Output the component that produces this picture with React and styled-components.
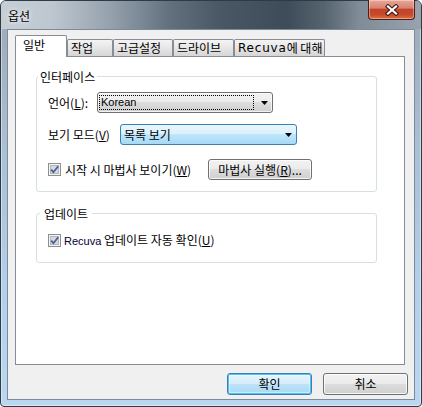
import React from "react";
import styled, { createGlobalStyle, css } from "styled-components";

const kr = `"Noto Sans CJK KR", "Noto Sans", sans-serif`;
const latin = `"Liberation Sans", "Noto Sans CJK KR", sans-serif`;

const GlobalStyle = createGlobalStyle`
  html, body { margin: 0; padding: 0; background: #ffffff; }
  body { font-family: ${kr}; font-size: 12px; color: #000; }
  * { box-sizing: border-box; }
`;

const Window = styled.div`
  width: 422px;
  height: 407px;
  border: 1px solid #2f3a45;
  border-radius: 6px 6px 4px 4px;
  background: linear-gradient(180deg, #9ca9b6 0%, #a9bfd4 35%, #b3cfea 70%, #bad6f1 100%);
  box-shadow: inset 0 0 0 1px rgba(255, 255, 255, 0.45);
  display: flex;
  flex-direction: column;
`;

const TitleBar = styled.div`
  height: 28px;
  flex: none;
  display: flex;
  align-items: flex-start;
  padding-left: 7px;
  border-radius: 5px 5px 0 0;
  background: linear-gradient(
    90deg,
    #c6ced6 0%,
    #bec7d0 12%,
    #95a1ad 26%,
    #63717f 40%,
    #4a5866 52%,
    #3e4c5a 68%,
    #56646f 77%,
    #7f8b97 85%,
    #98a3ae 100%
  );
`;

const Title = styled.div`
  font: 12px/14px ${kr};
  color: #000;
  margin-top: 8px;
  text-shadow: 0 0 4px rgba(255, 255, 255, 0.9), 0 0 8px rgba(255, 255, 255, 0.6);
`;

const CloseButton = styled.div`
  width: 47px;
  height: 20px;
  margin: -1px 6px 0 auto;
  flex: none;
  display: flex;
  align-items: center;
  justify-content: center;
  border: 1px solid #4e1f17;
  border-top: none;
  border-radius: 0 0 4px 4px;
  background: linear-gradient(
    180deg,
    #e6a89a 0%,
    #d9826f 42%,
    #c3432a 50%,
    #c54a2b 78%,
    #df7444 100%
  );
  box-shadow: inset 0 0 0 1px rgba(255, 255, 255, 0.35);
`;

const Client = styled.div`
  flex: 1;
  margin: 0 6px 6px;
  border: 1px solid #7d8a98;
  background: #f0f0f0;
  display: flex;
  flex-direction: column;
  padding: 5px 6px 4px 7px;
`;

const TabStrip = styled.div`
  height: 21px;
  flex: none;
  display: flex;
  align-items: flex-end;
`;

const Tab = styled.div`
  width: ${(p) => p.$w}px;
  flex: none;
  display: flex;
  align-items: center;
  border: 1px solid #898c95;
  border-bottom: none;
  border-radius: 2px 2px 0 0;
  font: 12px/14px ${kr};
  white-space: nowrap;
  ${(p) =>
    p.$active
      ? css`
          height: 22px;
          margin-bottom: -1px;
          background: #ffffff;
          padding: 0 0 3px 7px;
          position: relative;
          z-index: 1;
        `
      : css`
          height: 17px;
          padding: 0 0 0 3px;
          background: linear-gradient(180deg, #f4f4f4 0%, #e6e6e6 50%, #d6d6d6 100%);
        `}
`;

const TabLatin = styled.span`
  font-family: "DejaVu Sans", sans-serif;
  letter-spacing: 0.8px;
`;

const Pane = styled.div`
  flex: 1;
  margin-right: 3px;
  background: #ffffff;
  border: 1px solid #898c95;
  padding: 12px 27px 0 20px;
`;

const Group = styled.fieldset`
  margin: 0;
  min-width: 0;
  padding: ${(p) => p.$pad};
  border: 1px solid #d5dfe5;
  border-radius: 3px;
  & + & {
    margin-top: 14px;
  }
`;

const Legend = styled.legend`
  margin-left: ${(p) => p.$inset}px;
  padding: 0 ${(p) => p.$space}px;
  font: 12px/15px ${kr};
  color: #000;
`;

const Row = styled.div`
  display: flex;
  align-items: center;
  height: ${(p) => p.$h}px;
  margin-top: ${(p) => p.$mt || 0}px;
`;

const FieldLabel = styled.div`
  width: ${(p) => p.$w}px;
  flex: none;
  font: 12px/14px ${kr};
  white-space: nowrap;
`;

const Key = styled.span`
  text-decoration: underline;
  text-underline-offset: 1px;
`;

const Combo = styled.div`
  width: ${(p) => p.$w}px;
  height: 21px;
  flex: none;
  display: flex;
  align-items: center;
  justify-content: space-between;
  border-radius: 3px;
  padding: 0 4px 0 ${(p) => p.$padLeft}px;
  ${(p) =>
    p.$hover
      ? css`
          border: 1px solid #3c7fb1;
          background: linear-gradient(180deg, #eaf6fd 0%, #d9f0fc 49%, #bee6fd 50%, #a7d9f5 100%);
        `
      : css`
          border: 1px solid #707070;
          background: linear-gradient(180deg, #f2f2f2 0%, #ebebeb 49%, #dddddd 50%, #cfcfcf 100%);
          box-shadow: inset 0 0 0 1px rgba(255, 255, 255, 0.7);
        `}
`;

const FocusBox = styled.div`
  width: 155px;
  height: 15px;
  border: 1px dotted #000;
  display: flex;
  align-items: center;
  padding-left: 1px;
  font: 11px/13px ${latin};
`;

const ComboText = styled.div`
  font: 12px/14px ${kr};
  white-space: nowrap;
`;

const CheckLabel = styled.label`
  width: ${(p) => (p.$w ? `${p.$w}px` : "auto")};
  flex: none;
  display: flex;
  align-items: center;
  gap: ${(p) => p.$gap}px;
  font: 12px/14px ${kr};
  white-space: nowrap;
`;

const LatinText = styled.span`
  font: 11px/14px ${latin};
  color: #000033;
`;

const PushButton = styled.div`
  width: ${(p) => p.$w}px;
  height: ${(p) => p.$h}px;
  flex: none;
  display: flex;
  align-items: center;
  justify-content: center;
  border-radius: 3px;
  font: 12px/14px ${kr};
  white-space: nowrap;
  ${(p) =>
    p.$primary
      ? css`
          border: 1px solid #3c7fb1;
          background: linear-gradient(180deg, #e6f4fc 0%, #d4edfb 49%, #bde3f8 50%, #aad8f3 100%);
          box-shadow: inset 0 0 0 1px #4cc2f5, inset 0 0 0 2px rgba(255, 255, 255, 0.4);
        `
      : css`
          border: 1px solid #707070;
          background: linear-gradient(180deg, #f2f2f2 0%, #ebebeb 49%, #dddddd 50%, #cfcfcf 100%);
          box-shadow: inset 0 0 0 1px rgba(255, 255, 255, 0.8);
        `}
`;

const ButtonRow = styled.div`
  flex: none;
  display: flex;
  justify-content: flex-end;
  gap: 11px;
  margin-top: 8px;
`;

const Checkbox = () => (
  <svg width="13" height="13" viewBox="0 0 13 13" style={{ flex: "none" }}>
    <rect x="0.5" y="0.5" width="12" height="12" fill="#f4f4f4" stroke="#8e8f8f" />
    <rect x="2.5" y="2.5" width="8" height="8" fill="#d6d9de" stroke="#b3b7bd" />
    <path d="M3.2 6.6 L5.4 9.2 L10.2 3.2" stroke="#4a5f98" strokeWidth="1.8" fill="none" />
  </svg>
);

const Arrow = () => (
  <svg width="7" height="4" viewBox="0 0 7 4" style={{ flex: "none" }}>
    <path d="M0 0 H7 L3.5 4 Z" fill="#000" />
  </svg>
);

const CloseGlyph = () => (
  <svg width="14" height="12" viewBox="0 0 14 12">
    <path d="M3 2.5 L11 9.5 M11 2.5 L3 9.5" stroke="#3a1a14" strokeWidth="4.2" strokeLinecap="square" />
    <path d="M3 2.5 L11 9.5 M11 2.5 L3 9.5" stroke="#ffffff" strokeWidth="2.2" strokeLinecap="square" />
  </svg>
);

export default function App() {
  return (
    <>
      <GlobalStyle />
      <Window>
        <TitleBar>
          <Title>옵션</Title>
          <CloseButton>
            <CloseGlyph />
          </CloseButton>
        </TitleBar>
        <Client>
          <TabStrip>
            <Tab $active $w={52}>일반</Tab>
            <Tab $w={46}>작업</Tab>
            <Tab $w={60}>고급설정</Tab>
            <Tab $w={61}>드라이브</Tab>
            <Tab $w={91}>
              <TabLatin>Recuva</TabLatin>에 대해
            </Tab>
          </TabStrip>
          <Pane>
            <Group $pad="8px 0 11px 11px">
              <Legend $inset={-10} $space={2}>인터페이스</Legend>
              <Row $h={21}>
                <FieldLabel $w={49}>
                  언어(<Key>L</Key>):
                </FieldLabel>
                <Combo $w={176} $padLeft={1}>
                  <FocusBox>Korean</FocusBox>
                  <Arrow />
                </Combo>
              </Row>
              <Row $h={21} $mt={11}>
                <FieldLabel $w={72}>
                  보기 모드(<Key>V</Key>)
                </FieldLabel>
                <Combo $w={177} $hover $padLeft={3}>
                  <ComboText>목록 보기</ComboText>
                  <Arrow />
                </Combo>
              </Row>
              <Row $h={21} $mt={14}>
                <CheckLabel $w={160} $gap={4}>
                  <Checkbox />
                  <span>
                    시작 시 마법사 보이기(<Key>W</Key>)
                  </span>
                </CheckLabel>
                <PushButton $w={104} $h={21}>
                  마법사 실행(<Key>R</Key>)...
                </PushButton>
              </Row>
            </Group>
            <Group $pad="13px 0 15px 11px">
              <Legend $inset={-8} $space={4}>업데이트</Legend>
              <Row $h={13}>
                <CheckLabel $gap={3}>
                  <Checkbox />
                  <span>
                    <LatinText>Recuva</LatinText> 업데이트 자동 확인(<Key>U</Key>)
                  </span>
                </CheckLabel>
              </Row>
            </Group>
          </Pane>
          <ButtonRow>
            <PushButton $primary $w={85} $h={22}>확인</PushButton>
            <PushButton $w={85} $h={22}>취소</PushButton>
          </ButtonRow>
        </Client>
      </Window>
    </>
  );
}
